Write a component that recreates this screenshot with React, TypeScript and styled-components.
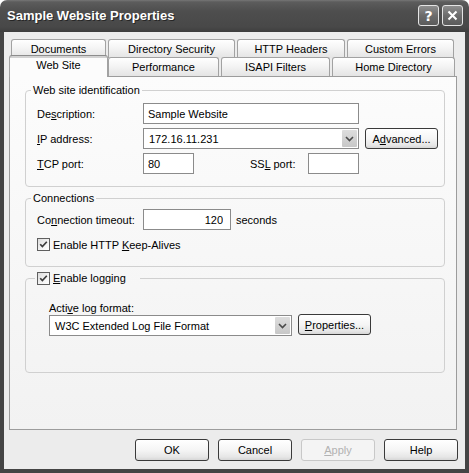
import React from 'react';
import styled, { createGlobalStyle } from 'styled-components';

const GlobalStyle = createGlobalStyle`
  html, body {
    margin: 0;
    padding: 0;
    background: #ffffff;
  }
  body {
    font-family: "Liberation Sans", Arial, sans-serif;
    font-size: 11px;
    color: #000;
  }
  * {
    box-sizing: border-box;
  }
`;

const Window = styled.div`
  width: 469px;
  height: 473px;
  display: flex;
  flex-direction: column;
  border-radius: 7px 7px 0 0;
  overflow: hidden;
`;

const TitleBar = styled.div`
  height: 32px;
  flex-shrink: 0;
  display: flex;
  align-items: center;
  justify-content: space-between;
  padding: 0 6px 1px 7px;
  background: linear-gradient(
    to bottom,
    #767676 0,
    #5c5c5c 2px,
    #4e4e4e 35%,
    #484848 85%,
    #3d3d3d 100%
  );
`;

const TitleText = styled.div`
  font-weight: bold;
  font-size: 13px;
  color: #ffffff;
  text-shadow: 1px 1px 0 #262626;
  white-space: nowrap;
`;

const CaptionButtons = styled.div`
  display: flex;
  gap: 3px;
`;

const CaptionButton = styled.div`
  width: 21px;
  height: 21px;
  border: 1px solid #e4e4e4;
  border-radius: 3px;
  background: linear-gradient(to bottom, #8e8e8e, #6c6c6c 50%, #5b5b5b);
  display: flex;
  align-items: center;
  justify-content: center;
  color: #ffffff;
  font-family: "DejaVu Sans", sans-serif;
  font-weight: bold;
  font-size: 14px;
  line-height: 1;
`;

const Frame = styled.div`
  flex: 1;
  display: flex;
  flex-direction: column;
  border: 4px solid #444444;
  border-top: 0;
  background: #ececec;
  padding: 7px 8px 0 5px;
`;

const TabStrip = styled.div`
  display: flex;
  flex-direction: column;
`;

const TabRow = styled.div<{ $front?: boolean }>`
  display: flex;
  gap: 2px;
  align-items: flex-end;
  position: relative;
  padding-left: ${p => (p.$front ? 0 : 2)}px;
  padding-bottom: ${p => (p.$front ? 1 : 0)}px;
  height: ${p => (p.$front ? 22 : 19)}px;
  margin-top: ${p => (p.$front ? -3 : 0)}px;
  margin-bottom: ${p => (p.$front ? -1 : 0)}px;
  z-index: ${p => (p.$front ? 2 : 1)};
`;

const Tab = styled.div<{ $w: number; $active?: boolean }>`
  position: relative;
  width: ${p => p.$w}px;
  height: ${p => (p.$active ? 22 : 19)}px;
  margin-bottom: ${p => (p.$active ? -1 : 0)}px;
  margin-right: ${p => (p.$active ? -2 : 0)}px;
  z-index: ${p => (p.$active ? 1 : 0)};
  border: 1px solid #a2a2a2;
  border-top-color: ${p => (p.$active ? '#8c8c8c' : '#a2a2a2')};
  border-bottom: 0;
  border-radius: 3px 3px 0 0;
  background: ${p =>
    p.$active
      ? 'linear-gradient(to bottom, #d2d2d2 0, #d2d2d2 2px, #fcfcfc 2px, #fcfcfc 100%)'
      : 'linear-gradient(to bottom, #ffffff, #f4f4f4 45%, #e4e4e4)'};
  display: flex;
  align-items: center;
  justify-content: center;
  padding-bottom: ${p => (p.$active ? 3 : 0)}px;
  white-space: nowrap;
`;

const Panel = styled.div`
  flex: 1;
  border: 1px solid #9c9c9c;
  background: linear-gradient(to bottom, #fcfcfc, #f2f2f2);
  padding: 7px 11px 0 15px;
  display: flex;
  flex-direction: column;
  gap: 5px;
`;

const GroupBox = styled.fieldset`
  margin: 0;
  padding: 0;
  min-width: 0;
  border: 1px solid #d0d0d0;
  border-radius: 4px;
`;

const GroupLegend = styled.legend<{ $indent: number; $padRight: number }>`
  margin-left: ${p => p.$indent}px;
  padding: 0 ${p => p.$padRight}px 0 2px;
  line-height: 13px;
  height: 13px;
  font-size: 11px;
`;

const LegendInner = styled.span`
  display: inline-flex;
  align-items: center;
  height: 13px;
  vertical-align: top;
`;

const GroupBody = styled.div<{ $pt: number; $pb: number; $pl: number; $gap: number }>`
  display: flex;
  flex-direction: column;
  padding: ${p => p.$pt}px 0 ${p => p.$pb}px ${p => p.$pl}px;
  gap: ${p => p.$gap}px;
`;

const Row = styled.div<{ $h?: number }>`
  display: flex;
  align-items: center;
  height: ${p => p.$h ?? 21}px;
`;

const Label = styled.span<{ $w?: number; $ml?: number }>`
  width: ${p => (p.$w ? `${p.$w}px` : 'auto')};
  margin-left: ${p => p.$ml ?? 0}px;
  flex-shrink: 0;
  white-space: nowrap;
`;

const Key = styled.span`
  text-decoration: underline;
  text-underline-offset: 1px;
`;

const TextField = styled.input<{ $w: number; $right?: boolean }>`
  width: ${p => p.$w}px;
  height: 21px;
  margin: 0;
  border: 1px solid #8b8b8b;
  background: #ffffff;
  padding: 0 ${p => (p.$right ? 7 : 4)}px 0 4px;
  font-family: inherit;
  font-size: 11px;
  color: #000;
  text-align: ${p => (p.$right ? 'right' : 'left')};
  outline: none;
`;

const Combo = styled.div<{ $w: number }>`
  width: ${p => p.$w}px;
  height: 21px;
  flex-shrink: 0;
  border: 1px solid #8b8b8b;
  background: #ffffff;
  display: flex;
  align-items: stretch;
  padding: 1px;
`;

const ComboText = styled.span`
  flex: 1;
  display: flex;
  align-items: center;
  padding-left: 4px;
  white-space: nowrap;
`;

const ComboArrow = styled.div`
  width: 15px;
  border-radius: 1px;
  background: linear-gradient(to bottom, #dddddd, #c7c7c7);
  display: flex;
  align-items: center;
  justify-content: center;
`;

const PushButton = styled.button<{ $w: number; $h?: number; $ml?: number; $raise?: number }>`
  width: ${p => p.$w}px;
  height: ${p => p.$h ?? 21}px;
  margin: 0;
  margin-left: ${p => p.$ml ?? 0}px;
  margin-top: ${p => -(p.$raise ?? 0)}px;
  flex-shrink: 0;
  padding: 0;
  border: 1px solid #3a3a3a;
  border-radius: 3px;
  background: linear-gradient(to bottom, #ffffff, #f5f5f5 50%, #e6e6e6 85%, #d6d6d6);
  font-family: inherit;
  font-size: 11px;
  color: #000;
  white-space: nowrap;

  &:disabled {
    border-color: #c8c8c8;
    background: #f4f4f4;
    color: #b2b2b2;
  }
`;

const CheckRow = styled.div`
  display: flex;
  align-items: center;
  height: 13px;
  gap: 3px;
`;

const CheckBox = styled.span`
  width: 13px;
  height: 13px;
  flex-shrink: 0;
  border: 1px solid #5f5f5f;
  background: linear-gradient(135deg, #dcdcdc, #f4f4f4 60%, #ffffff);
  display: inline-flex;
  align-items: center;
  justify-content: center;
`;

const Footer = styled.div`
  height: 39px;
  flex-shrink: 0;
  display: flex;
  justify-content: flex-end;
  align-items: flex-start;
  gap: 9px;
  padding-top: 9px;
  margin-right: -1px;
`;

const Chevron = () => (
  <svg width="9" height="6" viewBox="0 0 9 6">
    <path d="M1 1 L4.5 4.5 L8 1" fill="none" stroke="#4a4a4a" strokeWidth="1.6" />
  </svg>
);

const Checked = () => (
  <CheckBox>
    <svg width="11" height="11" viewBox="0 0 11 11">
      <path d="M2.2 5.2 L4.4 7.6 L8.8 2.8" fill="none" stroke="#3c3c3c" strokeWidth="1.7" />
    </svg>
  </CheckBox>
);

const backTabs = [
  { label: 'Documents', w: 95 },
  { label: 'Directory Security', w: 127 },
  { label: 'HTTP Headers', w: 108 },
  { label: 'Custom Errors', w: 107 },
];

const frontTabs = [
  { label: 'Web Site', w: 99, active: true },
  { label: 'Performance', w: 111 },
  { label: 'ISAPI Filters', w: 109 },
  { label: 'Home Directory', w: 123 },
];

const App: React.FC = () => {
  return (
    <>
      <GlobalStyle />
      <Window>
        <TitleBar>
          <TitleText>Sample Website Properties</TitleText>
          <CaptionButtons>
            <CaptionButton>?</CaptionButton>
            <CaptionButton>
              <svg width="11" height="11" viewBox="0 0 11 11">
                <path d="M1.5 1.5 L9.5 9.5 M9.5 1.5 L1.5 9.5" stroke="#ffffff" strokeWidth="2.1" />
              </svg>
            </CaptionButton>
          </CaptionButtons>
        </TitleBar>

        <Frame>
          <TabStrip>
            <TabRow>
              {backTabs.map(t => (
                <Tab key={t.label} $w={t.w}>{t.label}</Tab>
              ))}
            </TabRow>
            <TabRow $front>
              {frontTabs.map(t => (
                <Tab key={t.label} $w={t.w} $active={t.active}>{t.label}</Tab>
              ))}
            </TabRow>
          </TabStrip>

          <Panel>
            <GroupBox>
              <GroupLegend $indent={5} $padRight={2}>Web site identification</GroupLegend>
              <GroupBody $pt={6} $pb={12} $pl={11} $gap={4}>
                <Row>
                  <Label $w={106}>De<Key>s</Key>cription:</Label>
                  <TextField $w={216} defaultValue="Sample Website" readOnly />
                </Row>
                <Row>
                  <Label $w={106}><Key>I</Key>P address:</Label>
                  <Combo $w={216}>
                    <ComboText>172.16.11.231</ComboText>
                    <ComboArrow><Chevron /></ComboArrow>
                  </Combo>
                  <PushButton $w={73} $ml={6}>A<Key>d</Key>vanced...</PushButton>
                </Row>
                <Row>
                  <Label $w={106}><Key>T</Key>CP port:</Label>
                  <TextField $w={51} defaultValue="80" readOnly />
                  <Label $w={58} $ml={56}>SS<Key>L</Key> port:</Label>
                  <TextField $w={51} defaultValue="" readOnly />
                </Row>
              </GroupBody>
            </GroupBox>

            <GroupBox>
              <GroupLegend $indent={5} $padRight={2}>Connections</GroupLegend>
              <GroupBody $pt={4} $pb={15} $pl={11} $gap={8}>
                <Row>
                  <Label $w={106}>Co<Key>n</Key>nection timeout:</Label>
                  <TextField $w={88} $right defaultValue="120" readOnly />
                  <Label $ml={5}>seconds</Label>
                </Row>
                <CheckRow>
                  <Checked />
                  <span>Enable HTTP <Key>K</Key>eep-Alives</span>
                </CheckRow>
              </GroupBody>
            </GroupBox>

            <GroupBox>
              <GroupLegend $indent={9} $padRight={14}>
                <LegendInner>
                  <CheckRow>
                    <Checked />
                    <span><Key>E</Key>nable logging</span>
                  </CheckRow>
                </LegendInner>
              </GroupLegend>
              <GroupBody $pt={16} $pb={36} $pl={23} $gap={1}>
                <Row $h={13}>
                  <Label>Acti<Key>v</Key>e log format:</Label>
                </Row>
                <Row>
                  <Combo $w={243}>
                    <ComboText>W3C Extended Log File Format</ComboText>
                    <ComboArrow><Chevron /></ComboArrow>
                  </Combo>
                  <PushButton $w={73} $ml={6} $raise={2}><Key>P</Key>roperties...</PushButton>
                </Row>
              </GroupBody>
            </GroupBox>
          </Panel>

          <Footer>
            <PushButton $w={74} $h={22}>OK</PushButton>
            <PushButton $w={74} $h={22}>Cancel</PushButton>
            <PushButton $w={74} $h={22} disabled><Key>A</Key>pply</PushButton>
            <PushButton $w={74} $h={22}>Help</PushButton>
          </Footer>
        </Frame>
      </Window>
    </>
  );
};

export default App;
